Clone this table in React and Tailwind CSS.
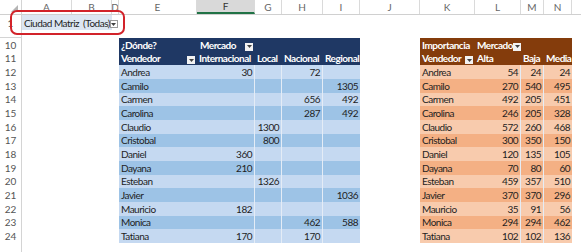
import React from 'react';

// column letters across the top, with widths in px written as full classes
const cols = [
  { k: 'A', w: 'w-[50px]' },
  { k: 'B', w: 'w-[40px]' },
  { k: 'D', w: 'w-[7px]' },
  { k: 'E', w: 'w-[78px]' },
  { k: 'F', w: 'w-[58px]', sel: true },
  { k: 'G', w: 'w-[27px]' },
  { k: 'H', w: 'w-[41px]' },
  { k: 'I', w: 'w-[37px]' },
  { k: 'J', w: 'w-[60px]' },
  { k: 'K', w: 'w-[55px]' },
  { k: 'L', w: 'w-[46px]' },
  { k: 'M', w: 'w-[23px]' },
  { k: 'N', w: 'w-[28px]' },
];

// blue pivot: Internacional, Local, Nacional, Regional
const donde = [
  ['Andrea', '30', '', '72', ''],
  ['Camilo', '', '', '', '1305'],
  ['Carmen', '', '', '656', '492'],
  ['Carolina', '', '', '287', '492'],
  ['Claudio', '', '1300', '', ''],
  ['Cristobal', '', '800', '', ''],
  ['Daniel', '360', '', '', ''],
  ['Dayana', '210', '', '', ''],
  ['Esteban', '', '1326', '', ''],
  ['Javier', '', '', '', '1036'],
  ['Mauricio', '182', '', '', ''],
  ['Monica', '', '', '462', '588'],
  ['Tatiana', '170', '', '170', ''],
];

// orange pivot: Alta, Baja, Media
const importancia = [
  ['Andrea', '54', '24', '24'],
  ['Camilo', '270', '540', '495'],
  ['Carmen', '492', '205', '451'],
  ['Carolina', '246', '205', '328'],
  ['Claudio', '572', '260', '468'],
  ['Cristobal', '300', '350', '150'],
  ['Daniel', '120', '135', '105'],
  ['Dayana', '70', '80', '60'],
  ['Esteban', '459', '357', '510'],
  ['Javier', '370', '370', '296'],
  ['Mauricio', '35', '91', '56'],
  ['Monica', '294', '294', '462'],
  ['Tatiana', '102', '102', '136'],
];

const Drop = ({ light }) => (
  <span
    className={`inline-flex items-center justify-center w-[8px] h-[8px] shrink-0 ${
      light ? 'bg-white border border-[#9a9a9a]' : 'bg-[#f2f2f2]'
    }`}
  >
    <svg width="5" height="3" viewBox="0 0 5 3">
      <path d="M0 0h5L2.5 3z" fill="#404040" />
    </svg>
  </span>
);

const RowHead = ({ n, h }) => (
  <div className={`w-[22px] ${h} shrink-0 flex items-center justify-center text-[10px] tracking-normal text-[#555] border-r border-[#d4d4d4]`}>
    {n}
  </div>
);

const Row = ({ n, children }) => (
  <div className="flex h-[13.67px]">
    <RowHead n={n} h="h-[13.67px]" />
    {children}
  </div>
);

const Cell = ({ w, bg = '', right, bold, line, children }) => (
  <div
    className={`${w} ${bg} shrink-0 flex items-center px-[2px] whitespace-nowrap overflow-visible ${
      right ? 'justify-end' : ''
    } ${bold ? 'font-bold text-white' : 'text-[#1e1e1e]'} ${line ? 'border-r border-[#e4ecf6]' : ''}`}
  >
    {children}
  </div>
);

export default function App() {
  return (
    <div className="relative w-[581px] h-[252px] bg-white overflow-hidden font-['Lato',sans-serif] text-[10px] tracking-[-0.5px] leading-none">
      {/* column letters */}
      <div className="flex h-[15px] border-b border-[#d0d0d0]">
        <div className="w-[22px] shrink-0 flex items-end justify-end pr-[3px] pb-[2px] border-r border-[#d4d4d4]">
          <svg width="7" height="7" viewBox="0 0 7 7">
            <path d="M7 0v7H0z" fill="#b5b5b5" />
          </svg>
        </div>
        {cols.map((c) => (
          <div
            key={c.k}
            className={`${c.w} shrink-0 flex items-center justify-center overflow-hidden text-[10px] tracking-normal border-r border-[#dadada] ${
              c.sel ? 'bg-[#d9d9d9] text-[#333] border-b-2 border-b-[#217346]' : 'text-[#666]'
            }`}
          >
            {c.k}
          </div>
        ))}
      </div>

      {/* row 1: report filter */}
      <div className="flex h-[15px]">
        <RowHead n="1" h="h-[15px]" />
        <div className="w-[90px] shrink-0 flex items-center whitespace-nowrap bg-[#dce6f2] pl-[2px] pr-[2px] text-[#1e1e1e]">
          <span>Ciudad Matriz</span>
          <span className="ml-[4px]">(Todas)</span>
          <span className="ml-auto">
            <Drop light />
          </span>
        </div>
      </div>
      <div className="flex h-[8px]">
        <div className="w-[22px] border-r border-b border-[#d4d4d4]" />
      </div>

      {/* rows 10 and 11: pivot headers */}
      <Row n="10">
        <div className="w-[97px] shrink-0" />
        <Cell w="w-[78px]" bg="bg-[#1f3864]" bold>¿Dónde?</Cell>
        <Cell w="w-[58px]" bg="bg-[#1f3864]" bold>
          <span className="ml-[1px]">Mercado</span>
          <span className="ml-auto"><Drop /></span>
        </Cell>
        <Cell w="w-[27px]" bg="bg-[#1f3864]" />
        <Cell w="w-[41px]" bg="bg-[#1f3864]" />
        <Cell w="w-[37px]" bg="bg-[#1f3864]" />
        <div className="w-[60px] shrink-0" />
        <Cell w="w-[55px]" bg="bg-[#843c0c]" bold>Importancia</Cell>
        <Cell w="w-[46px]" bg="bg-[#843c0c]" bold>
          <span>Mercado</span>
          <span className="ml-auto"><Drop /></span>
        </Cell>
        <Cell w="w-[23px]" bg="bg-[#843c0c]" />
        <Cell w="w-[28px]" bg="bg-[#843c0c]" />
      </Row>
      <Row n="11">
        <div className="w-[97px] shrink-0" />
        <Cell w="w-[78px]" bg="bg-[#1f3864]" bold>
          <span>Vendedor</span>
          <span className="ml-auto"><Drop /></span>
        </Cell>
        <Cell w="w-[58px]" bg="bg-[#1f3864]" bold>Internacional</Cell>
        <Cell w="w-[27px]" bg="bg-[#1f3864]" bold>Local</Cell>
        <Cell w="w-[41px]" bg="bg-[#1f3864]" bold>Nacional</Cell>
        <Cell w="w-[37px]" bg="bg-[#1f3864]" bold>Regional</Cell>
        <div className="w-[60px] shrink-0" />
        <Cell w="w-[55px]" bg="bg-[#843c0c]" bold>
          <span>Vendedor</span>
          <span className="ml-auto"><Drop /></span>
        </Cell>
        <Cell w="w-[46px]" bg="bg-[#843c0c]" bold>Alta</Cell>
        <Cell w="w-[23px]" bg="bg-[#843c0c]" bold>Baja</Cell>
        <Cell w="w-[28px]" bg="bg-[#843c0c]" bold>Media</Cell>
      </Row>

      {/* rows 12-24: data */}
      {donde.map((d, i) => {
        const o = importancia[i];
        const blue = i % 2 === 0 ? 'bg-[#c5d9f1]' : 'bg-[#9dc3e6]';
        const orange = i % 2 === 0 ? 'bg-[#f8cbad]' : 'bg-[#f4b084]';
        return (
          <Row key={d[0]} n={12 + i}>
            <div className="w-[97px] shrink-0" />
            <Cell w="w-[78px]" bg={blue}>{d[0]}</Cell>
            <Cell w="w-[58px]" bg={blue} right line>{d[1]}</Cell>
            <Cell w="w-[27px]" bg={blue} right line>{d[2]}</Cell>
            <Cell w="w-[41px]" bg={blue} right line>{d[3]}</Cell>
            <Cell w="w-[37px]" bg={blue} right>{d[4]}</Cell>
            <div className="w-[60px] shrink-0" />
            <Cell w="w-[55px]" bg={orange}>{o[0]}</Cell>
            <Cell w="w-[46px]" bg={orange} right line>{o[1]}</Cell>
            <Cell w="w-[23px]" bg={orange} right line>{o[2]}</Cell>
            <Cell w="w-[28px]" bg={orange} right>{o[3]}</Cell>
          </Row>
        );
      })}
      <div className="flex h-[10px]">
        <div className="w-[22px] border-r border-[#d4d4d4]" />
      </div>

      {/* red highlight around the report filter */}
      <div className="absolute left-[10px] top-[10px] w-[115px] h-[25px] border-2 border-[#d2232a] rounded-[7px] pointer-events-none" />
    </div>
  );
}
